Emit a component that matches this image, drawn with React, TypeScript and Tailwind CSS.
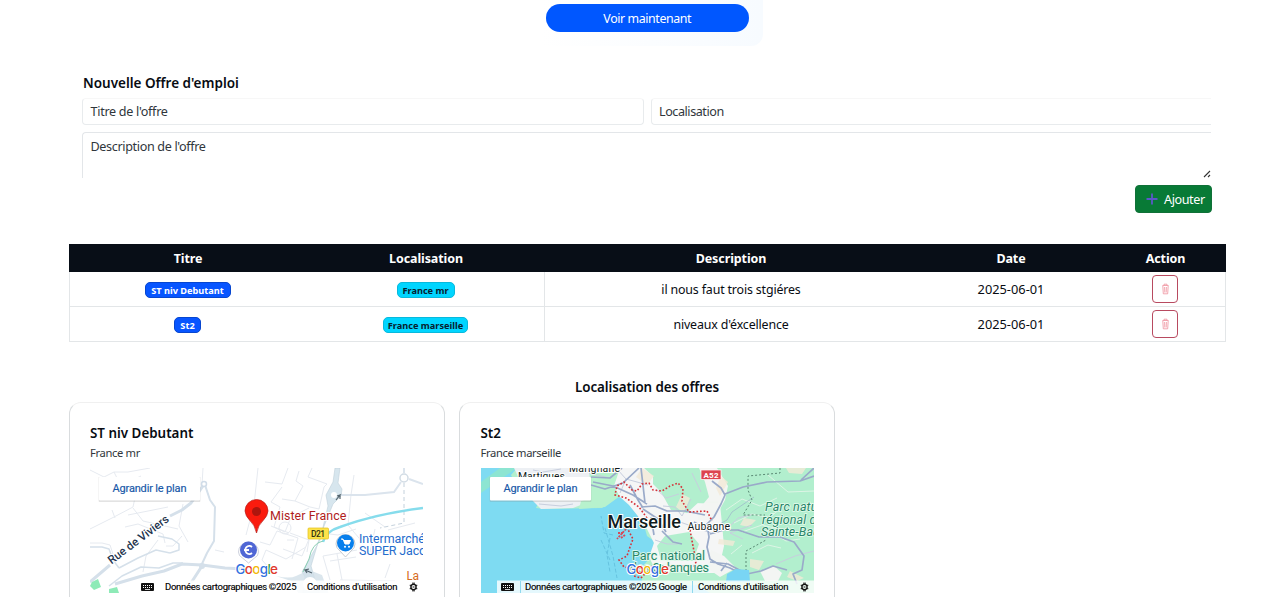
import React from "react";

const columns = ["w-[238px]", "w-[238px]", "w-[372px]", "w-[188px]", "w-[121px]"];
const headings = ["Titre", "Localisation", "Description", "Date", "Action"];

const offers = [
  { title: "ST niv Debutant", tw: "w-[86px]", place: "France mr", pw: "w-[58px]", text: "il nous faut trois stgiéres", date: "2025-06-01" },
  { title: "St2", tw: "w-[27px]", place: "France marseille", pw: "w-[85px]", text: "niveaux d'éxcellence", date: "2025-06-01" },
];

function TrashIcon() {
  return (
    <svg width="9" height="12" viewBox="0 0 9 12" fill="none" stroke="#ee8b99" strokeWidth="0.9">
      <path d="M1.500 2.500h6M3 2.300V1.200h3v1.100M1.800 2.800l.5 8h4.400l.5-8M3.600 4l.2 5.500M5.400 4l-.2 5.500" opacity=".85" />
    </svg>
  );
}

function GoogleLogo({ x, y }: { x: number; y: number }) {
  return (
    <text x={x} y={y} fontSize="13.5" fontWeight="500" textLength="42.5" stroke="#fff" strokeWidth="2" paintOrder="stroke" fontFamily="Inter, sans-serif">
      <tspan fill="#3272e0">G</tspan>
      <tspan fill="#df3a2f">o</tspan>
      <tspan fill="#f2b90c">o</tspan>
      <tspan fill="#3272e0">g</tspan>
      <tspan fill="#2f9d4c">l</tspan>
      <tspan fill="#df3a2f">e</tspan>
    </text>
  );
}

function MapFooter({ solid }: { solid: boolean }) {
  return (
    <g>
      <rect x={solid ? 16 : 48} y="112.500" width={solid ? 317 : 285} height="12.500" fill="#fff" opacity={solid ? 0.8 : 0.85} />
      {solid && <path d="M39.500 113v12M211.500 113v12" stroke="#8fd9ee" />}
      <g transform={solid ? "translate(20 115)" : "translate(51 115)"}>
        <rect width="13" height="8" rx="1" fill="#111" />
        <path d="M2 2.500h9.500M2 4.500h9.500" stroke="#fff" strokeWidth="1" strokeDasharray="1 1" />
        <path d="M4 6.500h5" stroke="#fff" strokeWidth=".8" />
      </g>
      <g fontSize="9.500" fill="#000" stroke="#000" strokeWidth=".15">
        <text x={solid ? 44 : 75} y="122" textLength={solid ? 162 : 131.500}>
          {solid ? "Données cartographiques ©2025 Google" : "Données cartographiques ©2025"}
        </text>
        <text x="217" y="122" textLength="90.500">Conditions d'utilisation</text>
      </g>
      <g transform="translate(323.500 119)" fill="none" stroke="#111">
        <circle r="2.600" strokeWidth="1.400" />
        <path d="M-1.500-3.800h3M-1.500 3.800h3M-3.800-1.700h1.300M2.500-1.700h1.300M-3.800 1.700h1.300M2.500 1.700h1.300M-1 0h2" />
      </g>
    </g>
  );
}

function EnlargeButton() {
  return (
    <g>
      <rect x="9" y="10" width="101" height="24" fill="#777" opacity=".14" />
      <rect x="8.500" y="9" width="102" height="24.500" fill="#999" opacity=".2" />
      <rect x="9" y="9" width="101" height="23.500" rx="1" fill="#fff" />
      <text x="22.500" y="24" fontSize="11" fill="#1758a8" stroke="#1758a8" strokeWidth=".15" textLength="74">Agrandir le plan</text>
    </g>
  );
}

function TownMap() {
  return (
    <svg width="333" height="125" viewBox="0 0 333 125" className="block" fontFamily="Roboto, sans-serif">
      <rect width="333" height="125" fill="#fff" />
      <g fill="none" stroke="#e6eaf0" strokeWidth="1">
        <path d="M0 2l14 7 10-5 14 0 22-4M24 4l7 14 20-10M0 61l24-12 19-10 3-14M25 50l-3-8M43 40l10 13 35 8M38 47l40-8M75 75L73 66 48 56l-13 3M93 36l-4 22 9 16M113 0l-1 17M125 82l9 2M53 104l3-16 12-16M0 75h12l8 2 3 9M92 68l-9 10-7 0" />
        <path d="M168 0l-4 37-8 30M175 14l17 2 6-16M192 19l-11 15 9 5-6 20 15 6M192 31l13 2 8-15-7-5 3-10M205 33l15 6 9 2 5-22 3-3-19-7 4-9M181 58l14 6 6-15 18-9M200 65l19 7-2 12M170 74l10 3 7-14 21 7-6 21M193 81l19 7 7-17M204 72l-7 0M180 101l-8-9 4-10 20 9 20-12M264 7l-3 20-3 30 16 19M267 82l-34 6 7 24M250 112l55 1M275 45l20 14M285 61l-5 23M298 62l27-7M276 86l30-3M232 65l16 2 18-6M240 93l26-4M252 112l-5-26M300 96l-5 14" />
        <circle cx="195" cy="60" r="6" />
      </g>
      <g fill="none" stroke="#d5e0ea" strokeLinejoin="round">
        <path d="M0 79h12l7 2 4 11 6 8M29 100l19-10 18-8 14 3M80 85l9-3 0-6-7-5-14-3M93 95l-10 0-14 5-18-1-19 9-13 10" strokeWidth="1.500" />
        <path d="M115 17l5 15 5 7-1 34-7 12-6 13" strokeWidth="2" />
        <path d="M0 114l20-17M115 15l-14 20-9 7-12 6" strokeWidth="3" />
        <path d="M25 116l27-8 22-5 18-7 20 1 23 3 19 1M112 98l-11 17" strokeWidth="3" />
      </g>
      <circle cx="112" cy="98" r="3" fill="#d5e0ea" />
      <circle cx="114" cy="16" r="2.500" fill="#fff" stroke="#d0dce8" strokeWidth="1.500" />
      <path d="M245 0h5l-2 15 4 6-1 7-8 8-13 32-9 30 8 27h-16l2-16-3-5 18-32 8-34-2-11 7-13z" fill="#d7e6ee" stroke="#bfd0da" strokeWidth=".6" />
      <path d="M186 108q14 3 20 0l13-6 13 5 7 19h-30l-8-13z" fill="#d2e0e8" opacity=".8" />
      <circle cx="220" cy="116" r="7" fill="#fff" />
      <circle cx="244" cy="27" r="3" fill="#fff" />
      <circle cx="314" cy="10" r="4" fill="#fff" stroke="#d2dce5" strokeWidth="1.500" />
      <path d="M314 15v40l-24 5" fill="none" stroke="#c4d1dc" strokeDasharray="4 3" />
      <path d="M314 0v5M251 27h24l29-3 7-10M319 11l14 5" fill="none" stroke="#dbe4ed" strokeWidth="2" />
      <path d="M233 74q3-11 17-15 35-13 83-19" fill="none" stroke="#86dcec" strokeWidth="2.500" />
      <path d="M233 73q-11 2-14 18l-6 13" fill="none" stroke="#8ccfb4" strokeWidth="1" />
      <path d="M246 32l4-5-3 1M250 27l0 4M222 105l-7-3 4-1M215 102l2 3" stroke="#53636c" strokeWidth="1.200" fill="none" />
      <path d="M2 114l6-3 3 8-7 3-4-4zM19 121l8-2 2 6h-10z" fill="#8eeab7" />
      <g fill="#25354e" stroke="#fff" strokeWidth="2" paintOrder="stroke">
        <text transform="translate(21.500 96.500) rotate(-37)" fontSize="11.500" fontWeight="500" textLength="73">Rue de Viviers</text>
      </g>
      <g stroke="#fff" strokeWidth="2" paintOrder="stroke">
        <text x="180" y="52" fontSize="12.500" fill="#b01d1d" textLength="76.500">Mister France</text>
        <text x="269" y="74.500" fontSize="12.500" fill="#256ccd" textLength="66">Intermarché</text>
        <text x="269" y="87" fontSize="12.500" fill="#256ccd" textLength="74">SUPER Jacou</text>
        <text x="316.500" y="111.500" fontSize="12" fill="#d66c1e" textLength="12.500">La</text>
      </g>
      <rect x="218" y="60" width="20.500" height="11" rx="1" fill="#fce34b" stroke="#e3bd19" strokeWidth=".7" />
      <text x="221" y="69" fontSize="8.500" fontWeight="500" fill="#31300e" textLength="14">D21</text>
      <path d="M166.500 65q-1.500-8-7-13-4-4-4.500-9a11.500 11.500 0 0 1 23 0q-.5 5-4.500 9-5.500 5-7 13" fill="#fa1b0e" stroke="#b41c18" strokeWidth=".7" />
      <circle cx="166.500" cy="43.500" r="4.500" fill="#ad160e" />
      <path d="M148.500 84a10 10 0 0 1 20 0q0 4-4 6l-6 5-6-5q-4-2-4-6" fill="#fff" stroke="#b7bdce" strokeWidth=".7" />
      <circle cx="158.500" cy="82" r="8.500" fill="#5067d5" />
      <path d="M162 79a4 4 0 1 0 0 6M154 82h5" fill="none" stroke="#fff" strokeWidth="1.800" />
      <path d="M246 76a9.500 9.500 0 0 1 19 0q0 4-4 7l-5.500 6-5.500-6q-4-3-4-7" fill="#fff" stroke="#b9bdc2" strokeWidth=".8" />
      <circle cx="255.500" cy="75" r="8.500" fill="#087fec" />
      <path d="M251 71h2l2 5h4l1.500-3.500H254" fill="#fff" stroke="#fff" />
      <circle cx="255" cy="78.800" r="1" fill="#fff" />
      <circle cx="259" cy="78.800" r="1" fill="#fff" />
      <GoogleLogo x={145.5} y={106} />
      <EnlargeButton />
      <MapFooter solid={false} />
    </svg>
  );
}

function CoastMap() {
  return (
    <svg width="333" height="125" viewBox="0 0 333 125" className="block" fontFamily="Roboto, sans-serif">
      <rect width="333" height="125" fill="#b2efce" />
      <path d="M0 0h36l-6 7 6 12 22 14-3 7 8 1 58-1 16-11 13 3 11 18 5 18 7 5-2 15-13 14 4 14 20 3 34-2 13 8 10 3v2H0z" fill="#7edbf2" />
      <path d="M0 14L19 0H36L0 25z" fill="#8de5d2" />
      <path d="M33 0h82l-5 33-18 7-32 1-8-8-10-14z" fill="#edf0f4" />
      <path d="M108 0h31v28l-15 11-26 2 2-8 10-3z" fill="#b7f2cd" />
      <path d="M139 0l23-1 16 15 28 8 8 13 25 1 2 20 2 22-6 27-31 0-13-1-20-5-5-10 5-14-7-14-10-14-8-10-9-8-6-11z" fill="#f5f6f6" />
      <path d="M172 0h48l10 17-10 15-14 13-16-3-10-18-8-8zM184 68l24-4 10 12-6 17-32-1-4-14z" fill="#b2efce" />
      <path d="M218 0h18l11 18-3 14-11 20-16 0 1-11 10-12-4-15zM230 82l13 6 12 12-16 9-13-9zM284 113l-5-10 14-5 8 7-4 8z" fill="#f3f5f3" />
      <g fill="#f2ead7" opacity=".8">
        <path d="M161 0l12 8-7 9-11-8zM201 26l8 4-6 15-8-6zM240 8l7 6-8 14-4-8zM263 50l12 2-7 7-9-2zM238 71l16 2-2 5-15-2zM269 91l14 2-5 9-9-3zM305 0l20 0-4 6-13-1zM309 103l14 7-7 3-10-4z" />
      </g>
      <g fill="none" stroke="#f0f7ef" strokeWidth="1" opacity=".7">
        <path d="M245 42l16-11 18 7 17-8M253 55l18-9 17 4 12-10M261 64l20-7 21 5M271 85l16-8 13 3M225 34l12 0M287 7l20 17 26-1M250 86l11-9M292 65l13 8 14-2" />
      </g>
      <g fill="none" stroke="#c7cede" strokeWidth="1">
        <path d="M136 1l9 10-6 14M145 11l22 6M175 21l10 9 13-4M182 38l12 1 7 9M174 72l12 4 11 0M199 54l17 6 14 5M211 5l9 19M210 31l-9 17M238 56l10 3 9-9 13-3M262 71l-13-6 22-8M295 96l19-8 19-5M52 2l10 2 18-3M108 5l21 5M92 36l-12 2-22-2" />
      </g>
      <g fill="none" stroke="#9aaac9" strokeWidth="1.700" strokeLinejoin="round">
        <path d="M110 9l19 1 12-10M110 17l14 4 18-6 16-15M112 14l20 4 20 9 14 9M149 17l8 15 5 8M160 0l4 35M160 39l14-1 12 5 18 0 20 4M162 41l15 10 8 13M173 67l-3-18M181 63l11 11 9 2" />
        <path d="M231 13l9 7 4 7-4 9-7 13-7 7 2 13-2 10 3 12 8 5 12 4 12 6M244 26l18-7 24-5 33-1 14-5M333 0l-13 12M229 66l14-4 14 0 21 7 21 0 14 5 10 14-2 14-9 4 4 10M229 94l18 2 19 10 14-3 12-5 14 4M246 95l-6 8M213 54l15 9" />
        <path d="M228 62l18-10 5-8 22-15" strokeWidth="1" opacity=".6" />
      </g>
      <path d="M132 67l-9-2-3-17M129 70l-3 17 3 17M124 60l8 28 4 22M120 72l9 20" stroke="#60bddb" strokeWidth=".8" strokeDasharray="4 2" fill="none" />
      <path d="M145 61l-9 10M142 65l-5 0M140 70l4-3" stroke="#d54b59" strokeWidth="1.800" strokeDasharray="2 1" fill="none" />
      <path d="M166 50l-8-11-13-9-11-3 2-9 7-4 8 8 5 1 5-7 7-1 4 7 9 1 8-5 8-3 5 6-1 12 7 11 18-1 5 10M209 62l3 16 3 16-2 4-26 0-16 0-11 12-7-2 2-7-12-2-5-7 8-4 3-9 3-8-7-13" fill="none" stroke="#d53239" strokeWidth="1.600" strokeDasharray="1.700 1.900" />
      <path d="M299 0v5l-32 3 0 14 4 10-9 15h22M265 107v-24l20-11" fill="none" stroke="#5a8974" strokeDasharray="2 2" />
      <path d="M246 106l9-5 13 1 1 12h-24z" fill="#79d5f4" />
      <g fill="#111b20" stroke="#fff" strokeWidth="2" paintOrder="stroke">
        <text x="88" y="4" fontSize="10.500" textLength="51">Marignane</text>
        <text x="37" y="11.500" fontSize="10.500" textLength="47">Martigues</text>
        <text x="126.500" y="60" fontSize="18" fontWeight="500" textLength="73.500">Marseille</text>
        <text x="206.500" y="61.500" fontSize="10.500" textLength="42.500">Aubagne</text>
      </g>
      <g fill="#278568" stroke="#e6fbed" strokeWidth="1.500" paintOrder="stroke" fontSize="12.500">
        <text x="151" y="91.500" textLength="73">Parc national</text>
        <text x="149" y="104" textLength="79">des Calanques</text>
        <g fontStyle="italic">
          <text x="284" y="43" textLength="66">Parc naturel</text>
          <text x="281" y="55.500" textLength="61">régional de</text>
          <text x="280" y="68" textLength="76">Sainte-Baume</text>
        </g>
      </g>
      <rect x="220" y="2" width="20" height="9.500" fill="#dd444f" stroke="#fff" strokeWidth=".7" />
      <text x="222.500" y="9.800" fontSize="8" fontWeight="700" fill="#fff" textLength="15">A52</text>
      <GoogleLogo x={145.5} y={106} />
      <EnlargeButton />
      <MapFooter solid />
    </svg>
  );
}

function OfferCard({ title, place, pad, children }: { title: string; place: string; pad: string; children: React.ReactNode }) {
  return (
    <article className={`h-[220px] w-[376px] rounded-xl border border-[#d9dcde] border-t-[#f0f0f0] pt-5 ${pad}`}>
      <h3 className="h-5 text-[13.4px] leading-5 font-semibold">{title}</h3>
      <p className="mb-[7px] h-[18px] pt-px text-[11.2px] leading-[18px] tracking-[-0.35px] text-[#30363b]">{place}</p>
      {children}
    </article>
  );
}

export default function App() {
  return (
    <main className="h-[597px] w-[1280px] overflow-hidden bg-white font-['Noto_Sans',sans-serif] text-[#080c12]">
      <div className="ml-[540px] h-[46px] w-[223px] rounded-br-xl bg-linear-to-r from-white to-[#f7fbff] pt-1 pl-[5.5px]">
        <button className="block h-[27.5px] w-[203.5px] rounded-full bg-[#0057ff] pt-px text-[12.4px] leading-[27px] tracking-[-0.4px] text-white">Voir maintenant</button>
      </div>

      <form className="mt-[27px] ml-[82px] w-[1130px]">
        <h2 className="h-5 pl-px text-[13.5px] leading-5 font-semibold">Nouvelle Offre d'emploi</h2>
        <div className="mt-[5px] flex gap-[7px] tracking-[-0.3px]">
          <div className="h-[27px] w-[562px] rounded border border-[#e8ebed] border-t-[#f7f7f7] px-[7.5px] text-[12.6px] leading-[26px] text-[#30363b]">Titre de l'offre</div>
          <div className="h-[27px] w-[560px] rounded-l border border-r-0 border-[#e8ebed] border-t-[#f7f7f7] px-[7px] text-[12.6px] leading-[26px] tracking-[-0.45px] text-[#30363b]">Localisation</div>
        </div>
        <div className="mt-[7px] flex h-[46px] w-[1129px] items-end justify-between rounded-tl border-t border-l border-[#e3e6e9] pl-[7.5px]">
          <span className="h-full pt-px text-[12.6px] leading-[25px] tracking-[-0.35px] text-[#30363b]">Description de l'offre</span>
          <svg width="8" height="8" viewBox="0 0 8 8" stroke="#333" strokeWidth="1.100"><path d="M1 7l6-6M5 7l2-2" /></svg>
        </div>
        <div className="mt-[7px] flex justify-end">
          <button type="button" className="flex h-7 w-[77px] items-center rounded-[4px] border border-[#107138] bg-[#087a36] pl-2.5 text-[12.6px] tracking-[-0.4px] text-white">
            <svg width="12" height="12" viewBox="0 0 12 12" className="mr-[6px]" stroke="#5b58c9" strokeWidth="1.800"><path d="M6 .5v11M.5 6h11" /></svg>
            <span className="pt-[2px]">Ajouter</span>
          </button>
        </div>
      </form>

      <table className="mt-[31px] ml-[69px] w-[1157px] table-fixed border-separate border-spacing-0 text-center">
        <thead>
          <tr className="h-7 bg-[#080e17] text-[12.5px] font-bold text-white">
            {headings.map((h, i) => <th key={h} className={`${columns[i]} p-0 pt-px leading-[27px] tracking-[-0.1px]`}>{h}</th>)}
          </tr>
        </thead>
        <tbody>
          {offers.map((o) => (
            <tr key={o.title} className="h-[35px] text-[12.4px]">
              <td className="border-b border-l border-[#e3e6e8] p-0 pt-px pr-[2px]"><span className={`${o.tw} mx-auto block h-4 rounded-[5px] border border-[#0746cf] bg-[#0755ff] text-[9.2px] leading-[15px] font-bold whitespace-nowrap text-white`}>{o.title}</span></td>
              <td className="border-r border-b border-[#e3e6e8] p-0 pt-px"><span className={`${o.pw} mx-auto block h-4 rounded-[5px] border border-[#08b9dc] bg-[#00d5ff] text-[9.2px] leading-[15px] font-bold whitespace-nowrap text-[#07202e]`}>{o.place}</span></td>
              <td className="border-b border-[#e3e6e8] p-0 pt-[3px] tracking-[-0.15px]">{o.text}</td>
              <td className="border-b border-[#e3e6e8] p-0 pt-px text-[12.8px]">{o.date}</td>
              <td className="border-r border-b border-[#e3e6e8] p-0"><span className="mx-auto flex h-7 w-[26px] items-center justify-center rounded border border-[#b84a60] bg-white"><TrashIcon /></span></td>
            </tr>
          ))}
        </tbody>
      </table>

      <h2 className="mt-[35px] ml-[69px] h-5 w-[1156px] text-center text-[13.4px] leading-5 font-semibold tracking-[-0.1px]">Localisation des offres</h2>
      <section className="mt-[5px] ml-[69px] flex gap-[14px]">
        <OfferCard title="ST niv Debutant" place="France mr" pad="pl-[20px]"><TownMap /></OfferCard>
        <OfferCard title="St2" place="France marseille" pad="pl-[20.5px]"><CoastMap /></OfferCard>
      </section>
    </main>
  );
}
